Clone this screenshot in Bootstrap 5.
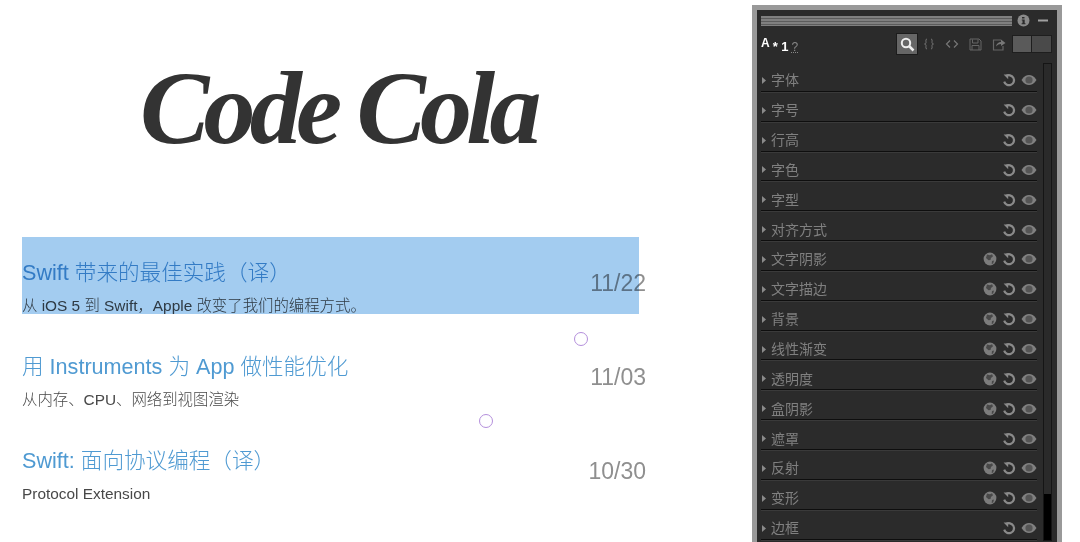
<!DOCTYPE html>
<html lang="zh">
<head>
    <meta charset="UTF-8">
    <meta name="viewport" content="width=device-width, initial-scale=1.0">
    <title>Code Cola</title>
    <link href="https://cdn.jsdelivr.net/npm/bootstrap@5.3.0/dist/css/bootstrap.min.css" rel="stylesheet">
    <style>
        html, body { height: 542px; overflow: hidden; background: #fff; }
        body { font-family: "Liberation Sans", "Noto Sans CJK SC", sans-serif; }
        .blog-col { width: 752px; flex: none; padding: 6px 0 0 22px; }
        .logo-box { height: 231px; width: 617px; padding: 42px 0 0 118px; }
        .logo-text { font-family: "Liberation Serif", serif; font-style: italic; font-weight: 700; font-size: 104px; line-height: 120px; color: #333; letter-spacing: -5.800px; white-space: nowrap; }
        .post-list { width: 617px; position: relative; }
        .post-item { height: 94px; padding-top: 22px; }
        .post-title { font-size: 21.600px; line-height: 28px; color: #4f9ad2; font-weight: 300; margin: 0 0 9px; white-space: nowrap; }
        .post-sub { font-size: 15.400px; line-height: 20px; color: #484848; margin: 0; white-space: nowrap; font-weight: 300; }
        .post-date { font-size: 23px; line-height: 28px; color: #8f8f8f; margin: 10px -7px 0 0; }
        .sel-box { position: absolute; inset: 0 0 auto 0; height: 77px; background: #a3ccf0; mix-blend-mode: multiply; }
        .click-ring { position: absolute; width: 14px; height: 14px; border: 1.500px solid #b48fdc; border-radius: 50%; }
        .ring-a { left: 552px; top: 95px; }
        .ring-b { left: 457px; top: 177px; }

        .tool-panel { width: 310px; height: 537px; margin-top: 5px; flex: none; background: #2b2b2b; border: 5px solid #999; border-bottom: 0; overflow: hidden; }
        .head-row { height: 19px; margin: 1px 0 0 4px; padding-right: 9px; }
        .grip { width: 251px; height: 10px; background: repeating-linear-gradient(#808080 0 2px, #5c5c5c 2px 3px); }
        .tool-row { height: 20px; margin: 4px 0 8px 4px; padding-right: 5px; color: #fff; }
        .abc { font-size: 12px; font-weight: 700; line-height: 14px; white-space: nowrap; position: relative; top: -1px; }
        .abc i { font-style: normal; font-size: 13px; margin-left: 3px; position: relative; top: 4px; }
        .abc u { font-weight: 400; color: #888; text-decoration: underline dotted; margin-left: 3px; position: relative; top: 4px; }
        .tool-btn { width: 20px; height: 20px; background: #666; box-shadow: 0 0 0 1px #1c1c1c; }
        .tool-gap { margin-left: 10px; }
        .tool-gap-s { margin-left: 6px; }
        .swatch { width: 20px; height: 18px; background: #5a5a5a; border: 1px solid #1e1e1e; }
        .swatch + .swatch { background: #4a4a4a; border-left: 0; }
        .prop-wrap { position: relative; }
        .prop-row { height: 29.850px; margin-left: 4px; width: 276px; border-bottom: 1px solid #0e0e0e; box-shadow: 0 1px 0 #3a3a3a; color: #808080; font-size: 14px; line-height: 20px; padding-top: 8px; }
        .prop-row svg { flex: none; }
        .ic-gap { margin-right: 5px; }
        .scroll-track { position: absolute; left: 286px; top: 1px; width: 9px; height: 100%; background: #000; border: 1px solid #151515; }
        .scroll-thumb { height: 430px; background: #2a2a2a; }
    </style>
</head>
<body class="d-flex align-items-start">
    <svg width="0" height="0" class="position-absolute">
        <symbol id="ic-undo" viewBox="0 0 14 14"><path d="M4 3.200A5 5 0 1 1 2.200 8.600" fill="none" stroke="#8a8a8a" stroke-width="2.200"/><path d="M1.600 1.600h4.600v4.600z" fill="#8a8a8a"/></symbol>
        <symbol id="ic-eye" viewBox="0 0 16 12"><path d="M0.500 6C3 2 5.500 1 8 1s5 1 7.500 5C13 10 10.500 11 8 11S3 10 .5 6z" fill="#808080"/><circle cx="8" cy="6" r="3.600" fill="#555"/></symbol>
        <symbol id="ic-globe" viewBox="0 0 14 14"><circle cx="7" cy="7" r="6.400" fill="#7c7c7c"/><path d="M4 2.500l3 .8 2-1 1 2-2 1.700-.5 2-2 .3-2.500-2.300zM9 9l2-.5-.8 3-1.500.5z" fill="#484848"/></symbol>
    </svg>

    <div class="blog-col">
        <div class="logo-box"><div class="logo-text">Code Cola</div></div>
        <div class="post-list" id="post-list">
            <div class="sel-box"></div>
            <span class="click-ring ring-a"></span>
            <span class="click-ring ring-b"></span>
        </div>
    </div>

    <div class="tool-panel">
        <div class="head-row d-flex align-items-center justify-content-between">
            <div class="grip"></div>
            <div class="d-flex align-items-center gap-2">
                <svg width="13" height="13" viewBox="0 0 13 13"><circle cx="6.500" cy="6.500" r="6" fill="#8a8a8a"/><path d="M5 3h2.500v1.600H5zM4.800 5.500h2.900v3.700h.8v1H4.600v-1h.9V6.500h-.7z" fill="#2b2b2b"/></svg>
                <svg width="10" height="3" viewBox="0 0 10 3"><rect width="10" height="2" y=".5" fill="#a0a0a0"/></svg>
            </div>
        </div>
        <div class="tool-row d-flex align-items-center">
            <div class="abc flex-grow-1">A<i>* 1</i><u>?</u></div>
            <div class="d-flex align-items-center">
                <div class="tool-btn d-flex align-items-center justify-content-center">
                    <svg width="15" height="15" viewBox="0 0 15 15"><circle cx="6" cy="6" r="4.200" fill="none" stroke="#eee" stroke-width="2"/><path d="M9 9l4.500 4.500" stroke="#eee" stroke-width="2.500"/></svg>
                </div>
                <svg class="tool-gap-s" width="12" height="12" viewBox="0 0 12 12"><path d="M4 1C2.500 1 3 3 3 4.500S1.500 6 1.500 6 3 6 3 7.500 2.500 11 4 11M8 1c1.500 0 1 2 1 3.500s1.500 1.500 1.500 1.500S9 6 9 7.500 9.500 11 8 11" fill="none" stroke="#777"/></svg>
                <svg class="tool-gap" width="14" height="10" viewBox="0 0 14 10"><path d="M5 1.500L1.500 5 5 8.500M9 1.500L12.500 5 9 8.500" fill="none" stroke="#777" stroke-width="1.200"/></svg>
                <svg class="tool-gap" width="13" height="13" viewBox="0 0 13 13"><path d="M1 1h9l2 2v9H1zM3.500 1.500v3.500h5.500V1.500M3 12V7.500h7V12" fill="none" stroke="#666"/></svg>
                <svg class="tool-gap" width="14" height="13" viewBox="0 0 14 13"><path d="M9 2H1.500v10h9.500V8" fill="none" stroke="#666" stroke-width="1.200"/><path d="M4 8.500C4.500 5.500 6.500 4 9 4V1.500l4.500 3.500L9 8V6C7 6 5.500 6.800 4 8.500z" fill="#777"/></svg>
                <div class="d-flex tool-gap-s"><div class="swatch"></div><div class="swatch"></div></div>
            </div>
        </div>
        <div class="prop-wrap">
            <div class="scroll-track"><div class="scroll-thumb"></div></div>
            <div id="prop-list"></div>
        </div>
    </div>

    <script>
        const posts = [
            { title: "Swift 带来的最佳实践（译）", sub: "从 iOS 5 到 Swift，Apple 改变了我们的编程方式。", date: "11/22" },
            { title: "用 Instruments 为 App 做性能优化", sub: "从内存、CPU、网络到视图渲染", date: "11/03" },
            { title: "Swift: 面向协议编程（译）", sub: "Protocol Extension", date: "10/30" }
        ];
        const props = [
            ["字体", 0], ["字号", 0], ["行高", 0], ["字色", 0], ["字型", 0], ["对齐方式", 0],
            ["文字阴影", 1], ["文字描边", 1], ["背景", 1], ["线性渐变", 1], ["透明度", 1],
            ["盒阴影", 1], ["遮罩", 0], ["反射", 1], ["变形", 1], ["边框", 0]
        ];

        const postList = document.getElementById('post-list');
        posts.forEach(p => {
            postList.innerHTML += `
                <div class="post-item d-flex justify-content-between align-items-start">
                    <div>
                        <p class="post-title">${p.title}</p>
                        <p class="post-sub">${p.sub}</p>
                    </div>
                    <div class="post-date">${p.date}</div>
                </div>`;
        });

        const propList = document.getElementById('prop-list');
        props.forEach(([name, globe]) => {
            propList.innerHTML += `
                <div class="prop-row d-flex align-items-center">
                    <svg class="me-1" width="6" height="9" viewBox="0 0 6 9"><path d="M1 1l4 3.500L1 8z" fill="#8a8a8a"/></svg>
                    <span class="flex-grow-1">${name}</span>
                    ${globe ? '<svg class="ic-gap" width="14" height="14"><use href="#ic-globe"/></svg>' : ''}
                    <svg class="ic-gap" width="14" height="14"><use href="#ic-undo"/></svg>
                    <svg width="16" height="12"><use href="#ic-eye"/></svg>
                </div>`;
        });
    </script>
    <script src="https://cdn.jsdelivr.net/npm/bootstrap@5.3.0/dist/js/bootstrap.bundle.min.js"></script>
</body>
</html>
